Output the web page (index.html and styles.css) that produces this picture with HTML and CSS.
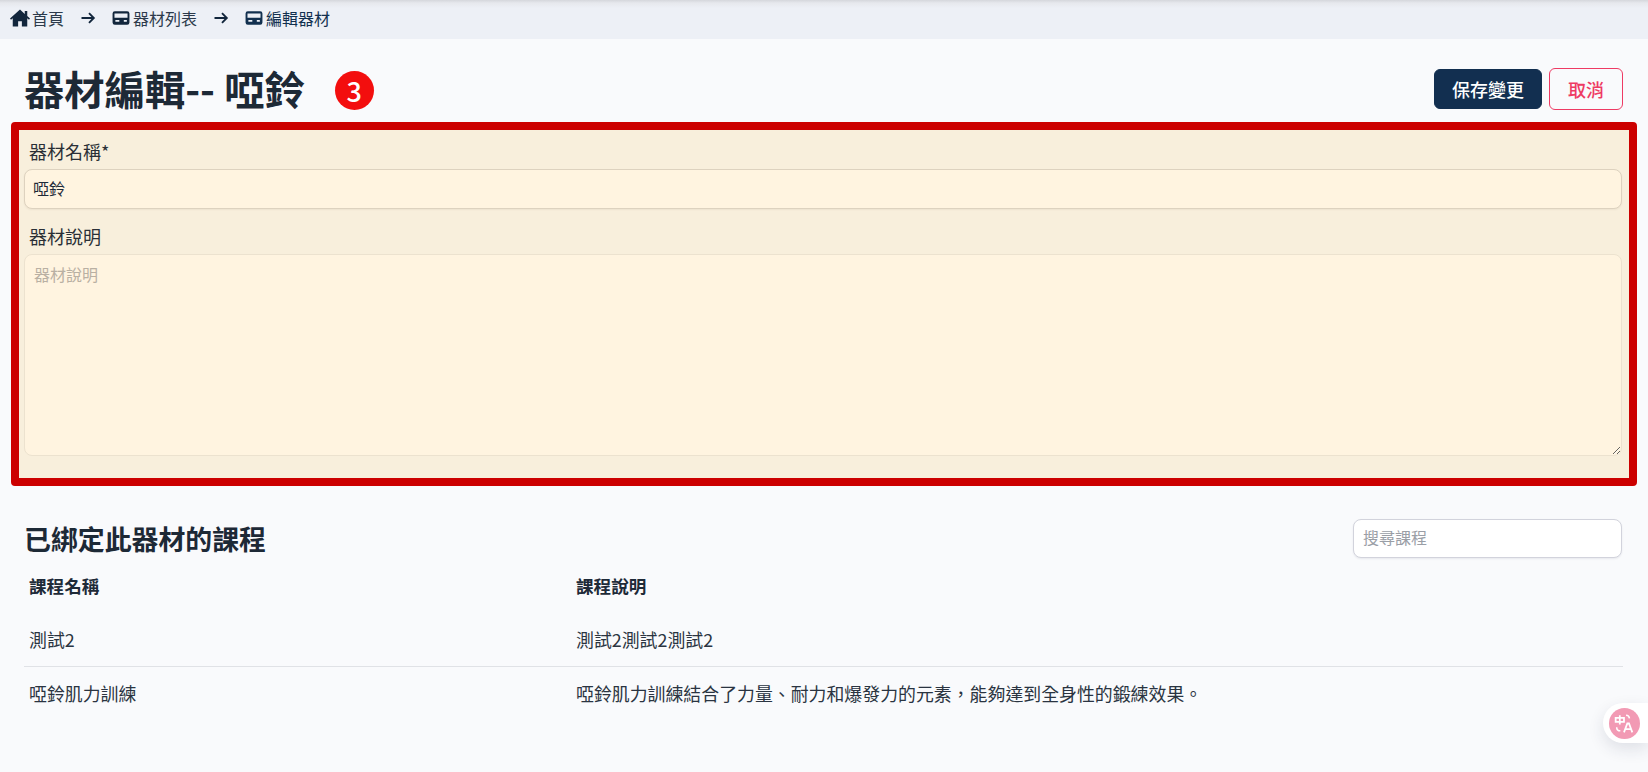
FILE: index.html
```html
<!DOCTYPE html>
<html lang="zh-Hant">
<head>
<meta charset="utf-8">
<title>器材編輯</title>
<link rel="stylesheet" href="styles.css">
</head>
<body>
<nav class="crumbs">
  <a class="crumb"><svg class="ico home" viewBox="0 0 16 16"><path d="M8 1.200 0 8.300l.8 1 1.400-1.200v6.700h4.300v-4.300h3v4.300h4.300V8.100l1.400 1.200.8-1-2.200-1.900V2.300h-2v2.400z"/></svg>首頁</a>
  <svg class="arrow" viewBox="0 0 16 16"><path d="M1.500 8h12.300M9 3.200 13.800 8 9 12.800" fill="none" stroke="currentColor" stroke-width="1.900"/></svg>
  <a class="crumb"><svg class="ico" viewBox="0 0 16 16"><path fill-rule="evenodd" d="M2.500 2h11a2 2 0 0 1 2 2v8a2 2 0 0 1-2 2h-11a2 2 0 0 1-2-2V4a2 2 0 0 1 2-2zM2.200 4v3.700h11.600V4zM3 9.800v1.600h3.500V9.800zM10.500 9.800v1.600h2.700V9.800z"/></svg>器材列表</a>
  <svg class="arrow" viewBox="0 0 16 16"><path d="M1.500 8h12.300M9 3.200 13.800 8 9 12.800" fill="none" stroke="currentColor" stroke-width="1.900"/></svg>
  <a class="crumb current"><svg class="ico" viewBox="0 0 16 16"><path fill-rule="evenodd" d="M2.500 2h11a2 2 0 0 1 2 2v8a2 2 0 0 1-2 2h-11a2 2 0 0 1-2-2V4a2 2 0 0 1 2-2zM2.200 4v3.700h11.600V4zM3 9.800v1.600h3.500V9.800zM10.500 9.800v1.600h2.700V9.800z"/></svg>編輯器材</a>
</nav>
<main class="page">
  <header class="head">
    <div class="title-wrap">
      <h1 class="title">器材編輯-- 啞鈴</h1>
      <span class="step">3</span>
    </div>
    <div class="actions">
      <button class="btn primary">保存變更</button>
      <button class="btn ghost">取消</button>
    </div>
  </header>
  <section class="form-box">
    <label class="lbl">器材名稱*</label>
    <input class="field name" type="text" value="啞鈴">
    <label class="lbl second">器材說明</label>
    <textarea class="field area" placeholder="器材說明"></textarea>
  </section>
  <section class="courses">
    <div class="courses-head">
      <h2 class="subtitle">已綁定此器材的課程</h2>
      <input class="search" type="text" placeholder="搜尋課程">
    </div>
    <div class="row th"><div>課程名稱</div><div>課程說明</div></div>
    <div class="row line"><div>測試2</div><div>測試2測試2測試2</div></div>
    <div class="row last"><div>啞鈴肌力訓練</div><div>啞鈴肌力訓練結合了力量、耐力和爆發力的元素，能夠達到全身性的鍛練效果。</div></div>
  </section>
</main>
<div class="translate"><span class="tr-dot"><svg viewBox="0 0 24 24"><path d="M7.500 4v9M3.500 6.500h8v4h-8z" fill="none" stroke="#fff" stroke-width="1.700"/><path d="M13.500 4c2 0 3 1 3.300 3M4.500 15.500c0 2.300 1.500 3.500 3.500 3.500" fill="none" stroke="#fff" stroke-width="1.500"/><path d="M11.500 20.500l3.200-8.500h1.600l3.200 8.500M12.800 17.500h5.400" fill="none" stroke="#fff" stroke-width="1.700"/></svg></span></div>
</body>
</html>
```
FILE: styles.css
```css
* { box-sizing: border-box; }
html, body { margin: 0; height: 100%; }
body {
  background: #f9fafc;
  color: #1e2a38;
  font-family: "Noto Sans CJK TC", "Noto Sans", sans-serif;
  font-size: 17.9px;
  overflow: hidden;
}
.crumbs {
  height: 39px;
  display: flex;
  align-items: center;
  padding: 0 10px 4px;
  font-size: 16px;
  color: #2c3a4b;
  background: linear-gradient(#d5d7dc 0, #e6e8ed 3px, #edf0f6 8px);
}
.crumb { display: flex; align-items: center; gap: 3px; }
.current { color: #12304f; }
.ico { width: 18px; height: 18px; fill: #12263c; }
.home { width: 20px; height: 20px; margin-right: -1px; }
.current .ico { fill: #12304f; }
.arrow { width: 16px; height: 16px; margin: 0 16px 0 16px; color: #12263c; }
.page { padding: 0 11px; }
.head {
  height: 83px;
  padding: 0 14px 0 13px;
  display: flex;
  align-items: center;
  justify-content: space-between;
}
.title-wrap { display: flex; align-items: center; gap: 30px; margin-top: 15px; }
.title { margin: 0; font-size: 40.3px; line-height: 48px; font-weight: 700; color: #1d2936; }
.step {
  width: 39px;
  height: 39px;
  margin-top: 4px;
  border-radius: 50%;
  background: #f30e0e;
  color: #fff;
  font-size: 27px;
  font-weight: 500;
  display: flex;
  align-items: center;
  justify-content: center;
}
.actions { display: flex; align-items: center; gap: 7px; margin-top: 17px; }
.btn {
  font: inherit;
  font-size: 18px;
  font-weight: 500;
  border-radius: 6px;
  padding: 0;
}
.primary { width: 108px; height: 40px; background: #122f50; border: 1px solid #122f50; color: #fff; }
.ghost { width: 74px; height: 42px; background: #f9fafc; border: 1px solid #ee3a63; color: #ee3a63; }
.form-box {
  height: 364px;
  border: 8px solid #cc0000;
  border-radius: 4px;
  background: #f8efdc;
  padding: 8px 7px 0 5px;
  display: flex;
  flex-direction: column;
}
.lbl { font-size: 18px; line-height: 26px; padding-left: 5px; color: #2a2f36; margin-bottom: 5px; }
.second { margin-top: 14px; margin-bottom: 5px; }
.field {
  font: inherit;
  font-size: 16px;
  background: #fff4e0;
  border: 1px solid #ddd2bf;
  border-radius: 8px;
  color: #1e2a38;
  padding: 0 8px;
  height: 40px;
  outline: none;
}
.name { padding-bottom: 2px; box-shadow: 0 1px 2px rgba(60, 40, 0, .06); }
.area { height: 202px; padding: 7px 9px; border-color: #ece2cf; resize: vertical; flex: none; }
.area::placeholder { color: #b9b0a3; opacity: 1; }
.courses { padding: 33px 14px 0 13px; }
.courses-head { display: flex; align-items: center; justify-content: space-between; }
.subtitle { margin: 0; font-size: 26.9px; line-height: 38px; font-weight: 700; color: #1d2936; }
.search {
  width: 269px;
  height: 39px;
  margin-right: 1px;
  border: 1px solid #d2d3dc;
  border-radius: 8px;
  background: #fff;
  box-shadow: 0 1px 2px rgba(20, 30, 60, .08);
  font: inherit;
  font-size: 16px;
  padding: 0 9px 3px;
  outline: none;
}
.search::placeholder { color: #9a9ea6; opacity: 1; }
.row {
  display: grid;
  grid-template-columns: 547px 1fr;
  align-items: center;
  height: 54px;
  padding-left: 5px;
  color: #2a3441;
}
.th { font-weight: 700; color: #1e2a38; font-size: 17.6px; }
.line { border-bottom: 1px solid #e0e2e6; height: 55px; }
.last { height: 52px; }
.translate {
  position: absolute;
  right: 0;
  top: 703px;
  width: 45px;
  height: 40px;
  background: #fff;
  border-radius: 20px 0 0 20px;
  box-shadow: 0 6px 16px rgba(30, 40, 70, .12);
  display: flex;
  align-items: center;
  padding-left: 6px;
}
.tr-dot {
  width: 31px;
  height: 31px;
  border-radius: 50%;
  background: #f29ab4;
  display: flex;
  align-items: center;
  justify-content: center;
}
.tr-dot svg { width: 25px; height: 25px; }
```
